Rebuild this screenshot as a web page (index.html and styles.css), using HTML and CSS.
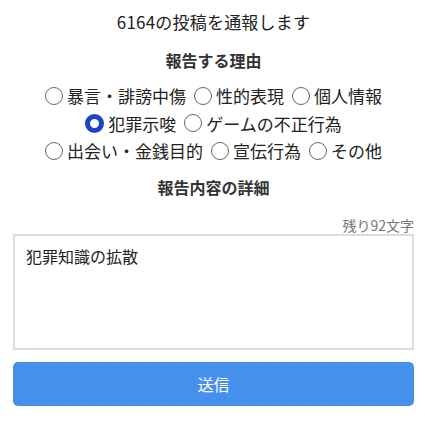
FILE: index.html
```html
<!DOCTYPE html>
<html lang="ja">
<head>
    <meta charset="UTF-8">
    <meta name="viewport" content="width=device-width, initial-scale=1.0">
    <title>投稿の通報</title>
    <link rel="stylesheet" href="styles.css">
</head>
<body>
    <div class="report">
        <p class="report-title">6164の投稿を通報します</p>
        <h3 class="section-title">報告する理由</h3>
        <div class="reasons">
            <label class="reason"><input type="radio" name="reason">暴言・誹謗中傷</label>
            <label class="reason"><input type="radio" name="reason">性的表現</label>
            <label class="reason"><input type="radio" name="reason">個人情報</label>
            <label class="reason"><input type="radio" name="reason" checked>犯罪示唆</label>
            <label class="reason"><input type="radio" name="reason">ゲームの不正行為</label>
            <label class="reason"><input type="radio" name="reason">出会い・金銭目的</label>
            <label class="reason"><input type="radio" name="reason">宣伝行為</label>
            <label class="reason"><input type="radio" name="reason">その他</label>
        </div>
        <h3 class="section-title detail-title">報告内容の詳細</h3>
        <div class="counter">残り92文字</div>
        <textarea class="detail">犯罪知識の拡散</textarea>
        <button type="button" class="send">送信</button>
    </div>
</body>
</html>
```

FILE: styles.css
```css
body {
    margin: 0;
    padding: 0;
    background-color: #fff;
    font-family: 'Noto Sans CJK JP', 'Noto Sans', sans-serif;
    color: #222;
}
.report {
    display: flex;
    flex-direction: column;
    padding: 9px 11px 0 13px;
}
.report-title {
    margin: 0;
    text-align: center;
    font-size: 17px;
    line-height: 26px;
    letter-spacing: 0.2px;
}
.section-title {
    margin: 13px 0 0;
    text-align: center;
    font-size: 16px;
    font-weight: 700;
    line-height: 24px;
    color: #333;
}
.reasons {
    display: flex;
    flex-wrap: wrap;
    justify-content: center;
    column-gap: 8px;
    margin: 10px 0 0;
}
.reason {
    display: flex;
    align-items: center;
    font-size: 17px;
    line-height: 27.5px;
}
.reason input {
    appearance: none;
    -webkit-appearance: none;
    width: 18px;
    height: 18px;
    margin: 0 4px 0 0;
    border: 1.5px solid #666;
    border-radius: 50%;
    box-sizing: border-box;
}
.reason input:checked {
    width: 19px;
    height: 19px;
    border: 5px solid #1d44c8;
}
.detail-title {
    margin-top: 10px;
}
.counter {
    margin-top: 18px;
    text-align: right;
    font-size: 14px;
    line-height: 16px;
    color: #777;
}
.detail {
    margin-top: 1px;
    height: 116px;
    padding: 8px 11px;
    border: 2px solid #ddd;
    border-radius: 0;
    box-sizing: border-box;
    font-family: 'Noto Sans CJK JP', 'Noto Sans', sans-serif;
    font-size: 16px;
    line-height: 24px;
    color: #222;
    resize: none;
}
.send {
    margin-top: 12px;
    height: 44px;
    border: none;
    border-radius: 5px;
    background-color: #4590ea;
    color: #fff;
    font-family: 'Noto Sans CJK JP', 'Noto Sans', sans-serif;
    font-size: 16px;
}
```
